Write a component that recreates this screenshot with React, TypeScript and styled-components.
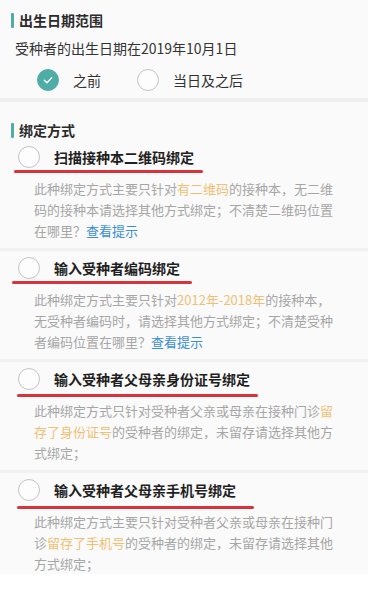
import styled, { createGlobalStyle } from 'styled-components';

const teal = '#4eaea7';

const GlobalStyle = createGlobalStyle`
  html, body {
    margin: 0;
    padding: 0;
    background: #ffffff;
  }
  body {
    font-family: "Noto Sans CJK SC", "Noto Sans", sans-serif;
    -webkit-font-smoothing: antialiased;
  }
`;

const Page = styled.div`
  width: 368px;
  background: #fafafa;
`;

const Section = styled.section<{ $top: number; $bottom: number }>`
  padding: ${(p) => p.$top}px 0 ${(p) => p.$bottom}px;
`;

const Divider = styled.div`
  height: 4px;
  background: #efefef;
`;

const Heading = styled.h2`
  display: flex;
  align-items: center;
  gap: 5px;
  margin: 0 0 0 11px;
  height: 20px;
  font-size: 14px;
  font-weight: 700;
  color: #2b2b2b;
  line-height: 20px;

  &::before {
    content: '';
    width: 3px;
    height: 15px;
    border-radius: 1px;
    background: ${teal};
  }
`;

const Subtitle = styled.p`
  margin: 8px 0 0 15px;
  font-size: 14px;
  line-height: 20px;
  color: #333333;
`;

const ChoiceRow = styled.div`
  display: flex;
  align-items: center;
  margin: 11px 0 0 37px;
  height: 22px;
`;

const Choice = styled.label<{ $width: number }>`
  display: flex;
  align-items: center;
  gap: 14px;
  width: ${(p) => p.$width}px;
  font-size: 14px;
  color: #333333;
`;

const Radio = styled.span<{ $checked?: boolean }>`
  box-sizing: border-box;
  display: flex;
  align-items: center;
  justify-content: center;
  flex: none;
  width: 22px;
  height: 22px;
  border-radius: 50%;
  border: 1px solid ${(p) => (p.$checked ? teal : '#c4c4c4')};
  background: ${(p) => (p.$checked ? teal : '#fdfdfd')};
`;

const Option = styled.div`
  position: relative;
  padding: 6px 0 7px;
  border-bottom: 3px solid #f1f1f1;

  &:last-child {
    padding-bottom: 0;
    border-bottom: none;
  }
`;

const OptionTitle = styled.div`
  display: flex;
  align-items: center;
  gap: 14px;
  height: 22px;
  padding-left: 18px;
  font-size: 14px;
  font-weight: 700;
  color: #1f1f1f;
`;

const Underline = styled.span<{ $left: number; $width: number; $offset: number }>`
  position: absolute;
  left: ${(p) => p.$left}px;
  top: ${(p) => 30 + p.$offset}px;
  width: ${(p) => p.$width}px;
  height: 3px;
  border-radius: 2px;
  background: #d8343c;
`;

const Description = styled.p`
  margin: 10px 0 0 34px;
  width: 302px;
  font-size: 13px;
  line-height: 21px;
  color: #a6a6a6;
`;

const Mark = styled.span`
  color: #f1bf74;
`;

const TipLink = styled.a`
  color: #3b8ed8;
  text-decoration: none;
`;

const Check = () => (
  <svg width="12" height="12" viewBox="0 0 12 12" fill="none">
    <path d="M2.3 6.2 L5 8.7 L9.8 3.6" stroke="#ffffff" strokeWidth="1.3" strokeLinecap="round" strokeLinejoin="round" />
  </svg>
);

type Line = React.ReactNode;
type Method = {
  title: string;
  lines: Line[];
  underline: { left: number; width: number; offset: number };
};

const methods: Method[] = [
  {
    title: '扫描接种本二维码绑定',
    underline: { left: 14, width: 189, offset: 0 },
    lines: [
      <>此种绑定方式主要只针对<Mark>有二维码</Mark>的接种本，无二维</>,
      <>码的接种本请选择其他方式绑定；不清楚二维码位置</>,
      <>在哪里？<TipLink href="#">查看提示</TipLink></>,
    ],
  },
  {
    title: '输入受种者编码绑定',
    underline: { left: 12, width: 180, offset: 0 },
    lines: [
      <>此种绑定方式主要只针对<Mark>2012年-2018年</Mark>的接种本，</>,
      <>无受种者编码时，请选择其他方式绑定；不清楚受种</>,
      <>者编码位置在哪里？<TipLink href="#">查看提示</TipLink></>,
    ],
  },
  {
    title: '输入受种者父母亲身份证号绑定',
    underline: { left: 17, width: 241, offset: 2 },
    lines: [
      <>此种绑定方式只针对受种者父亲或母亲在接种门诊<Mark>留</Mark></>,
      <><Mark>存了身份证号</Mark>的受种者的绑定，未留存请选择其他方</>,
      <>式绑定；</>,
    ],
  },
  {
    title: '输入受种者父母亲手机号绑定',
    underline: { left: 17, width: 237, offset: 3 },
    lines: [
      <>此种绑定方式主要只针对受种者父亲或母亲在接种门</>,
      <>诊<Mark>留存了手机号</Mark>的受种者的绑定，未留存请选择其他</>,
      <>方式绑定；</>,
    ],
  },
];

export default function App() {
  return (
    <>
      <GlobalStyle />
      <Page>
        <Section $top={10} $bottom={7}>
          <Heading>出生日期范围</Heading>
          <Subtitle>受种者的出生日期在2019年10月1日</Subtitle>
          <ChoiceRow>
            <Choice $width={100}>
              <Radio $checked>
                <Check />
              </Radio>
              之前
            </Choice>
            <Choice $width={130}>
              <Radio />
              当日及之后
            </Choice>
          </ChoiceRow>
        </Section>
        <Divider />
        <Section $top={18} $bottom={0}>
          <Heading>绑定方式</Heading>
          {methods.map((m) => (
            <Option key={m.title}>
              <OptionTitle>
                <Radio />
                {m.title}
              </OptionTitle>
              <Underline $left={m.underline.left} $width={m.underline.width} $offset={m.underline.offset} />
              <Description>
                {m.lines.map((line, i) => (
                  <span key={i}>
                    {line}
                    {i < m.lines.length - 1 && <br />}
                  </span>
                ))}
              </Description>
            </Option>
          ))}
        </Section>
      </Page>
    </>
  );
}
